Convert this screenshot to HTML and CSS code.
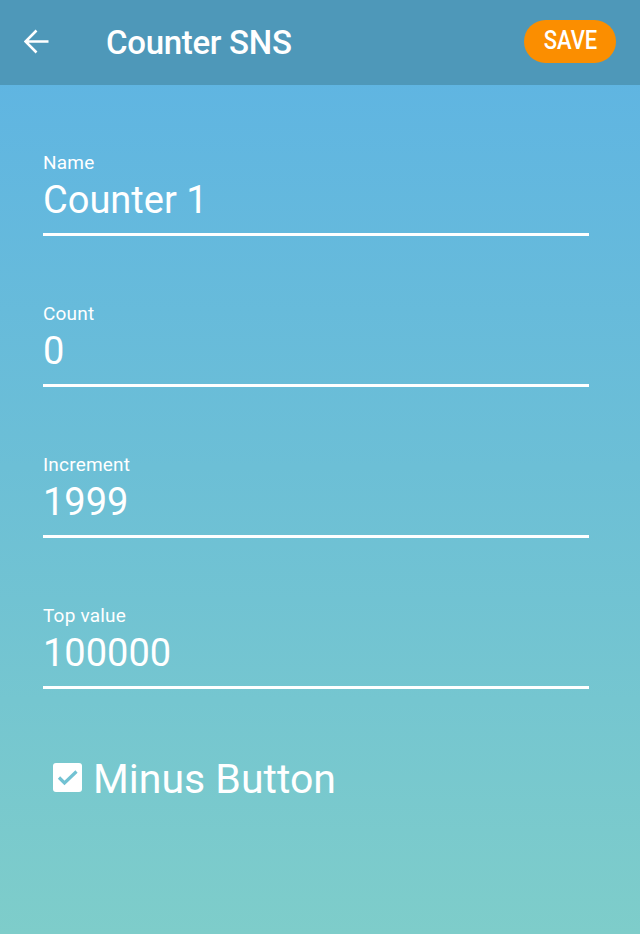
FILE: index.html
```html
<!DOCTYPE html>
<html lang="en">
<head>
<meta charset="utf-8">
<title>Counter SNS</title>
<link rel="stylesheet" href="styles.css">
</head>
<body>
<div class="app">
  <header class="toolbar">
    <svg class="back" viewBox="0 0 25 25" width="25" height="25" aria-hidden="true">
      <path d="M24.5 12.5H1.5M12.5 1.5L1.5 12.5L12.5 23.5" fill="none" stroke="#ffffff" stroke-width="2.6" stroke-linecap="butt" stroke-linejoin="miter"/>
    </svg>
    <h1 class="title">Counter SNS</h1>
    <button class="save"><span class="save-text">SAVE</span></button>
  </header>
  <main class="form">
    <div class="field">
      <div class="label">Name</div>
      <div class="value">Counter 1</div>
    </div>
    <div class="field">
      <div class="label">Count</div>
      <div class="value">0</div>
    </div>
    <div class="field">
      <div class="label">Increment</div>
      <div class="value">1999</div>
    </div>
    <div class="field">
      <div class="label">Top value</div>
      <div class="value">100000</div>
    </div>
    <div class="check-row">
      <span class="checkbox">
        <svg viewBox="0 0 29 29" width="29" height="29" aria-hidden="true">
          <path d="M6 14.5L11.5 20L23.5 8.5" fill="none" stroke="#72c2d3" stroke-width="3.2"/>
        </svg>
      </span>
      <span class="check-label">Minus Button</span>
    </div>
  </main>
</div>
</body>
</html>
```
FILE: styles.css
```css
* { box-sizing: border-box; }
html, body {
  margin: 0;
  padding: 0;
  height: 100%;
}
body {
  font-family: Roboto, "Liberation Sans", sans-serif;
  color: #ffffff;
  background: #6fc0d6;
}
.app {
  width: 640px;
  height: 934px;
  display: flex;
  flex-direction: column;
  background: linear-gradient(180deg, #5db3e4 0%, #6cbfd6 50%, #7ecdca 100%);
  overflow: hidden;
}
.toolbar {
  height: 85px;
  flex: 0 0 85px;
  background: #4e98b9;
  display: flex;
  align-items: center;
  padding: 0 24px;
}
.back {
  display: block;
  flex: 0 0 25px;
  margin-top: -3px;
}
.title {
  margin: 0 0 0 57px;
  font-size: 33px;
  font-weight: 500;
  line-height: 40px;
  letter-spacing: -0.3px;
  flex: 1 1 auto;
}
.save {
  width: 92px;
  height: 43px;
  border: none;
  border-radius: 22px;
  background: #fb8e00;
  color: #ffffff;
  font-family: Roboto, "Liberation Sans", sans-serif;
  font-size: 25px;
  font-weight: 500;
  padding: 0;
  display: flex;
  align-items: center;
  justify-content: center;
  margin-top: -3px;
}
.save-text {
  display: inline-block;
  transform: scaleX(0.88);
  line-height: 30px;
}
.form {
  padding: 68px 51px 0 43px;
  display: flex;
  flex-direction: column;
  gap: 68px;
}
.field {
  display: flex;
  flex-direction: column;
  border-bottom: 3px solid #ffffff;
  padding-bottom: 11px;
}
.label {
  font-size: 19px;
  line-height: 20px;
  letter-spacing: 0.2px;
}
.value {
  margin-top: 5px;
  font-size: 38px;
  line-height: 44px;
}
.check-row {
  display: flex;
  align-items: center;
  gap: 11px;
  padding-left: 10px;
  margin-top: -2px;
}
.checkbox {
  width: 29px;
  height: 29px;
  background: #ffffff;
  border-radius: 3px;
  display: block;
  flex: 0 0 29px;
  margin-top: -4px;
}
.checkbox svg { display: block; }
.check-label {
  font-size: 41px;
  line-height: 48px;
}
```
